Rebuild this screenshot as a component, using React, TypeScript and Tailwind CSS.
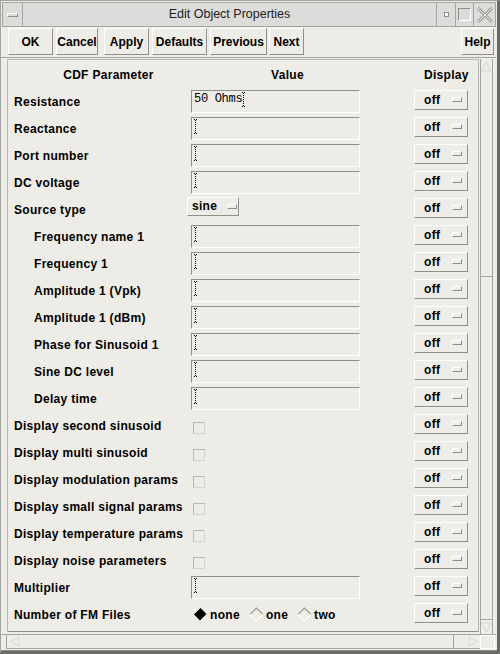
import React from 'react';

type Row = {
  label: string;
  kind: 'text' | 'select' | 'check' | 'radio';
  value?: string;
  indent?: boolean;
};

const rows: Row[] = [
  { label: 'Resistance', kind: 'text', value: '50 Ohms' },
  { label: 'Reactance', kind: 'text' },
  { label: 'Port number', kind: 'text' },
  { label: 'DC voltage', kind: 'text' },
  { label: 'Source type', kind: 'select', value: 'sine' },
  { label: 'Frequency name 1', kind: 'text', indent: true },
  { label: 'Frequency 1', kind: 'text', indent: true },
  { label: 'Amplitude 1 (Vpk)', kind: 'text', indent: true },
  { label: 'Amplitude 1 (dBm)', kind: 'text', indent: true },
  { label: 'Phase for Sinusoid 1', kind: 'text', indent: true },
  { label: 'Sine DC level', kind: 'text', indent: true },
  { label: 'Delay time', kind: 'text', indent: true },
  { label: 'Display second sinusoid', kind: 'check' },
  { label: 'Display multi sinusoid', kind: 'check' },
  { label: 'Display modulation params', kind: 'check' },
  { label: 'Display small signal params', kind: 'check' },
  { label: 'Display temperature params', kind: 'check' },
  { label: 'Display noise parameters', kind: 'check' },
  { label: 'Multiplier', kind: 'text' },
  { label: 'Number of FM Files', kind: 'radio' },
];

const raised = 'border border-t-white border-l-white border-b-[#8e8e8a] border-r-[#8e8e8a]';
const sunken = 'border border-t-[#8e8e8a] border-l-[#8e8e8a] border-b-white border-r-white';

function Cursor() {
  const dots = [1, 3, 5, 7, 9, 11, 13];
  return (
    <svg width="4" height="15" className="shrink-0 block">
      <rect x="0" y="0" width="1" height="1" fill="#000" />
      <rect x="2" y="0" width="1" height="1" fill="#000" />
      {dots.map((y) => (
        <rect key={y} x="1" y={y} width="1" height="1" fill="#000" />
      ))}
      <rect x="0" y="14" width="1" height="1" fill="#000" />
      <rect x="2" y="14" width="1" height="1" fill="#000" />
    </svg>
  );
}

function Indicator() {
  return <div className={`w-[10px] h-[5px] ${raised}`} />;
}

function Diamond({ on }: { on?: boolean }) {
  return (
    <svg width="15" height="15" className="shrink-0 block">
      {on ? (
        <>
          <polygon points="7.5,1 14,7.5 7.5,14 1,7.5" fill="#000" />
          <path d="M14 7.5 L7.5 14" stroke="#fff" strokeWidth="1.2" />
        </>
      ) : (
        <>
          <path d="M1 7.5 L7.5 1 L14 7.5" stroke="#9a9a96" strokeWidth="1.2" fill="none" />
          <path d="M1 7.5 L7.5 14 L14 7.5" stroke="#ffffff" strokeWidth="1.2" fill="none" />
        </>
      )}
    </svg>
  );
}

function Field({ value }: { value?: string }) {
  return (
    <div className={`ml-[4px] w-[169px] h-[23px] ${sunken} flex items-start pt-[1px] pl-[2px]`}>
      {value ? (
        <>
          <span className="font-['Liberation_Mono',monospace] text-[12px] leading-[15px] font-normal tracking-[-0.3px]">
            {value}
          </span>
          <Cursor />
        </>
      ) : (
        <Cursor />
      )}
    </div>
  );
}

function ValueCell({ row }: { row: Row }) {
  if (row.kind === 'text') return <Field value={row.value} />;
  if (row.kind === 'select')
    return (
      <div className={`-mt-[7px] w-[52px] h-[19px] ${raised} flex items-center pl-[4px] gap-[10px]`}>
        <span>{row.value}</span>
        <Indicator />
      </div>
    );
  if (row.kind === 'check')
    return (
      <div className="ml-[6px] mt-[4px] w-[12px] h-[12px] border border-[#b8b8b4] border-b-[#d4d4d0] border-r-[#d4d4d0]" />
    );
  return (
    <div className="ml-[6px] flex items-center">
      <Diamond on />
      <span className="ml-[2px]">none</span>
      <div className="ml-[9px]"><Diamond /></div>
      <span className="ml-[2px]">one</span>
      <div className="ml-[9px]"><Diamond /></div>
      <span className="ml-[2px]">two</span>
    </div>
  );
}

function ParamRow({ row }: { row: Row }) {
  return (
    <div className="h-[27px] flex items-center">
      <div className={`w-[179px] shrink-0 whitespace-nowrap ${row.indent ? 'pl-[26px]' : 'pl-[6px]'}`}>
        {row.label}
      </div>
      <div className="w-[227px] shrink-0 flex items-center">
        <ValueCell row={row} />
      </div>
      <div className={`mb-[4px] w-[54px] h-[20px] ${raised} flex items-center pl-[9px] gap-[12px]`}>
        <span>off</span>
        <Indicator />
      </div>
    </div>
  );
}

function ToolButton({ label, w, ml }: { label: string; w: string; ml: string }) {
  return (
    <button className={`${w} ${ml} h-[27px] ${raised} bg-[#edece6] flex items-center justify-center`}>
      {label}
    </button>
  );
}

export default function App() {
  return (
    <div className="w-[500px] h-[654px] bg-[#edece6] text-black font-['Liberation_Sans',Arial,sans-serif] font-bold text-[12px] tracking-[0.3px] border-l border-t border-[#a4a4a0] border-r-[3px] border-b-[3px] border-r-[#6a6a66] border-b-[#6a6a66] flex flex-col overflow-hidden">
      {/* title bar */}
      <div className="ml-[1px] mr-[1px] mt-[1px] h-[25px] border border-[#a4a4a0] bg-[#dcdcda] flex shrink-0">
        <div className="w-[20px] border-r border-[#a4a4a0] flex items-center justify-center">
          <div className={`w-[11px] h-[4px] ${raised}`} />
        </div>
        <div className="flex-1 flex items-center justify-center font-normal text-[12.5px] tracking-normal text-[#222]">
          Edit Object Properties
        </div>
        <div className="w-[19px] border-l border-[#a4a4a0] flex items-center justify-center">
          <div className="w-[5px] h-[5px] border border-[#8e8e8a] bg-white" />
        </div>
        <div className="w-[18px] border-l border-[#a4a4a0] flex items-center justify-center">
          <div className="w-[13px] h-[13px] border border-[#8e8e8a] border-b-white border-r-white" />
        </div>
        <div className="w-[22px] border-l border-[#a4a4a0] flex items-center justify-center">
          <svg width="16" height="16">
            <path d="M1 1 L15 15 M15 1 L1 15" stroke="#9a9a96" strokeWidth="3" />
            <path d="M1 1 L15 15 M15 1 L1 15" stroke="#eeeeea" strokeWidth="1" />
          </svg>
        </div>
      </div>

      {/* toolbar */}
      <div className="h-[30px] shrink-0 flex items-start pt-[1px] text-[12px] tracking-normal">
        <ToolButton label="OK" w="w-[45px]" ml="ml-[7px]" />
        <ToolButton label="Cancel" w="w-[42px]" ml="ml-[3px]" />
        <ToolButton label="Apply" w="w-[45px]" ml="ml-[6px]" />
        <ToolButton label="Defaults" w="w-[55px]" ml="ml-[3px]" />
        <ToolButton label="Previous" w="w-[57px]" ml="ml-[3px]" />
        <ToolButton label="Next" w="w-[35px]" ml="ml-[2px]" />
        <div className="flex-1" />
        <ToolButton label="Help" w="w-[33px]" ml="ml-0" />
        <div className="w-[3px]" />
      </div>

      {/* scrolled area */}
      <div className="flex-1 flex flex-col border-t border-[#a4a4a0] mr-[1px]">
        <div className="flex-1 flex pt-[1px]">
          <div className="ml-[6px] w-[472px] h-[573px] border border-[#b8b8b4] border-b-[#8e8e8a] pt-[1px] overflow-hidden">
            <div className="h-[27px] flex items-center">
              <div className="w-[201px] text-center">CDF Parameter</div>
              <div className="w-[157px] text-center">Value</div>
              <div className="pl-[58px]">Display</div>
            </div>
            {rows.map((r) => (
              <ParamRow key={r.label} row={r} />
            ))}
          </div>
          {/* vertical scrollbar */}
          <div className="ml-[1px] w-[13px] h-[575px] border-l border-r border-[#a4a4a0] flex flex-col">
            <div className="h-[14px] flex items-center justify-center">
              <svg width="11" height="11">
                <path d="M1 10 L5.5 1 L10 10 Z" fill="none" stroke="#c4c4c0" strokeDasharray="1 1" />
              </svg>
            </div>
            <div className="h-[204px] border-b border-[#a4a4a0]" />
            <div className="flex-1 border-b border-[#a4a4a0]" />
            <div className="h-[14px] flex items-center justify-center">
              <svg width="11" height="11">
                <path d="M1 1 L5.5 10 L10 1 Z" fill="none" stroke="#c4c4c0" strokeDasharray="1 1" />
              </svg>
            </div>
          </div>
        </div>
        {/* horizontal scrollbar */}
        <div className="h-[15px] flex items-stretch border-t border-[#a4a4a0] mb-[1px]">
          <div className="ml-[5px] w-[474px] flex border-b border-[#a4a4a0] border-l">
            <div className="w-[14px] flex items-center justify-center">
              <svg width="11" height="11">
                <path d="M10 1 L1 5.5 L10 10 Z" fill="none" stroke="#c4c4c0" strokeDasharray="1 1" />
              </svg>
            </div>
            <div className="w-[433px] border-r border-[#a4a4a0]" />
            <div className="flex-1" />
            <div className="w-[13px] flex items-center justify-center">
              <svg width="11" height="11">
                <path d="M1 1 L10 5.5 L1 10 Z" fill="none" stroke="#c4c4c0" strokeDasharray="1 1" />
              </svg>
            </div>
          </div>
          <div className="w-[15px] border border-white" />
        </div>
      </div>
      <div className="h-[3px] border-t border-[#8e8e8a] shrink-0" />
    </div>
  );
}
